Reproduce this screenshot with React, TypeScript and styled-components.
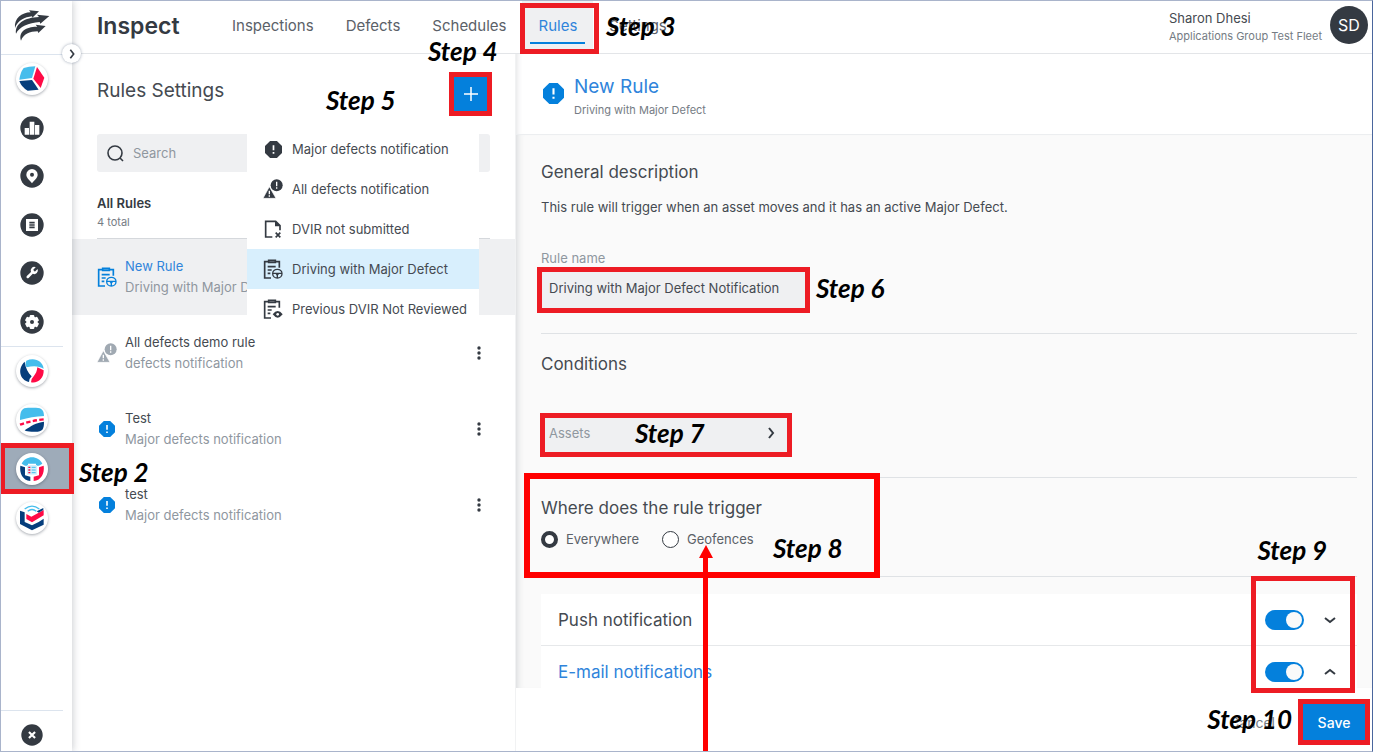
import React from "react";
import styled, { createGlobalStyle, css } from "styled-components";

const color = {
  text: "#454a51",
  dark: "#343a42",
  muted: "#8f979f",
  blue: "#0480dc",
  link: "#2f84db",
  fill: "#eff0f2",
  line: "#dfe2e5",
  red: "#ed1c24",
  navy: "#063e7c",
  sky: "#45bdec",
  crimson: "#ff0a45",
};

const GlobalStyle = createGlobalStyle`
  * { box-sizing: border-box; }
  body { margin: 0; font-family: Inter, "Liberation Sans", sans-serif; color: ${color.text}; background: #fff; }
  button, input { font: inherit; color: inherit; }
  button { border: 0; padding: 0; background: none; cursor: pointer; }
  h1, h2, h3, p, ul { margin: 0; padding: 0; font-weight: 400; }
  ul { list-style: none; }
  svg { display: block; flex: none; }
`;

/* ---------- shell ---------- */

const Page = styled.div`
  position: relative;
  display: flex;
  height: 100vh;
  min-height: 600px;
  overflow: hidden;
  border: 1px solid #a9b4cb;
  border-right-color: #4a669d;
`;

const Sidebar = styled.nav`
  position: relative;
  z-index: 2;
  flex: none;
  width: 71px;
  display: flex;
  flex-direction: column;
  background: #fff;
  box-shadow: 1px 0 7px rgba(50, 60, 75, 0.25);
`;

const SideSection = styled.div<{ $height: number; $top?: number }>`
  display: grid;
  grid-auto-rows: 1fr;
  height: ${(p) => p.$height}px;
  padding-top: ${(p) => p.$top ?? 0}px;
`;

const SideRule = styled.hr`
  width: 62px;
  height: 1px;
  margin: 0;
  border: 0;
  background: #dce4ee;
`;

const SideButton = styled.button<{ $active?: boolean }>`
  display: flex;
  align-items: center;
  justify-content: center;
  padding-right: 10px;
  ${(p) => p.$active && css`background: #9eabb9;`}
`;

const SideSpacer = styled.div`
  flex: 1;
`;

const AppBadge = styled.span`
  display: block;
  border-radius: 50%;
  background: #fff;
  box-shadow: 0 1px 3px rgba(40, 50, 65, 0.4);
`;

const Collapse = styled.button`
  position: absolute;
  z-index: 3;
  right: -9px;
  top: 43px;
  width: 19px;
  height: 19px;
  display: flex;
  align-items: center;
  justify-content: center;
  border-radius: 50%;
  background: #fff;
  box-shadow: 0 0 3px rgba(60, 80, 110, 0.5);
`;

const Main = styled.div`
  flex: 1;
  min-width: 0;
  display: flex;
  flex-direction: column;
`;

const TopBar = styled.header`
  flex: none;
  display: flex;
  height: 53px;
  padding: 0 4px 0 25px;
  border-bottom: 1px solid #e3e5e8;
`;

const Brand = styled.h1`
  width: 119px;
  font-size: 23px;
  line-height: 50px;
  font-weight: 600;
  color: ${color.dark};
`;

const Tab = styled.a<{ $active?: boolean }>`
  position: relative;
  padding: 0 16px;
  font-size: 15px;
  line-height: 49px;
  text-decoration: none;
  color: #5b6168;
  ${(p) =>
    p.$active &&
    css`
      color: ${color.link};
      background: ${color.fill};
      &::after {
        content: "";
        position: absolute;
        left: 8px;
        right: 8px;
        top: 41px;
        height: 2px;
        background: ${color.blue};
      }
    `}
`;

const User = styled.div`
  display: flex;
  gap: 8px;
  margin-left: auto;
  padding-top: 5px;
`;

const UserName = styled.p`
  padding-top: 3px;
  font-size: 13px;
  line-height: 18px;
`;

const UserGroup = styled.p`
  font-size: 11px;
  line-height: 18px;
  color: #757c84;
`;

const Avatar = styled.span`
  width: 38px;
  height: 38px;
  border-radius: 50%;
  background: ${color.dark};
  color: #fff;
  font-size: 16px;
  line-height: 38px;
  text-align: center;
`;

const Columns = styled.div`
  flex: 1;
  min-height: 0;
  display: flex;
`;

/* ---------- rules list ---------- */

const ListPane = styled.section`
  position: relative;
  flex: none;
  width: 443px;
  overflow: hidden;
`;

const ListHead = styled.div`
  display: flex;
  align-items: center;
  justify-content: space-between;
  padding: 20px 26px 20px 25px;
`;

const PaneTitle = styled.h2`
  font-size: 19px;
  line-height: 28px;
  padding-bottom: 6px;
`;

const AddButton = styled.button`
  width: 36px;
  height: 40px;
  display: flex;
  align-items: center;
  justify-content: center;
  background: ${color.blue};
`;

const SearchBox = styled.label`
  display: flex;
  align-items: center;
  gap: 8px;
  height: 38px;
  margin: 0 25px;
  padding: 0 9px;
  border-radius: 3px;
  background: ${color.fill};
`;

const SearchInput = styled.input`
  flex: 1;
  min-width: 0;
  border: 0;
  outline: 0;
  padding: 0;
  background: none;
  font-size: 13px;
  &::placeholder {
    color: ${color.muted};
    opacity: 1;
  }
`;

const ListSummary = styled.div`
  margin: 0 25px;
  padding: 21px 0 7px;
  border-bottom: 1px solid #d5d8dc;
`;

const SummaryTitle = styled.h3`
  font-size: 13px;
  line-height: 20px;
  font-weight: 600;
  color: ${color.dark};
`;

const SummaryCount = styled.p`
  font-size: 11px;
  line-height: 18px;
  color: #757c84;
`;

const RuleRow = styled.li<{ $selected?: boolean }>`
  display: flex;
  align-items: center;
  height: 76px;
  padding: 0 33px 0 25px;
  background: ${(p) => (p.$selected ? color.fill : "transparent")};
`;

const RuleIcon = styled.span`
  display: flex;
  justify-content: center;
  width: 20px;
  margin-right: 8px;
`;

const RuleText = styled.div`
  flex: 1;
`;

const RuleTitle = styled.p<{ $selected?: boolean }>`
  font-size: 13px;
  line-height: 21px;
  color: ${(p) => (p.$selected ? color.link : color.text)};
`;

const RuleKind = styled.p`
  font-size: 13px;
  line-height: 21px;
  color: ${color.muted};
`;

const Menu = styled.ul`
  position: absolute;
  top: 75px;
  left: 175px;
  width: 232px;
  background: #fff;
`;

const MenuItem = styled.li<{ $active?: boolean }>`
  background: ${(p) => (p.$active ? "#d8effd" : "#fff")};
`;

const MenuButton = styled.button`
  display: flex;
  align-items: center;
  width: 100%;
  height: 40px;
  padding-left: 16px;
  gap: 9px;
  font-size: 13px;
  white-space: nowrap;
`;

const MenuIcon = styled.span`
  width: 20px;
  display: flex;
  justify-content: center;
`;

/* ---------- rule editor ---------- */

const Editor = styled.section`
  flex: 1;
  min-width: 0;
  display: flex;
  flex-direction: column;
  border-left: 1px solid #f1f2f3;
`;

const EditorHead = styled.div`
  flex: none;
  display: flex;
  gap: 10px;
  height: 81px;
  padding: 20px 27px 0;
  border-bottom: 1px solid #eceef0;
  box-shadow: inset 6px 0 6px -6px rgba(50, 60, 75, 0.2);
`;

const HeadIcon = styled.span`
  padding-top: 9px;
`;

const EditorTitle = styled.h2`
  font-size: 19px;
  line-height: 25px;
  color: ${color.link};
`;

const EditorKind = styled.p`
  font-size: 11px;
  line-height: 22px;
  color: #757c84;
`;

const EditorBody = styled.div`
  flex: 1;
  min-height: 0;
  overflow: auto;
  scrollbar-width: none;
  padding: 0 15px 0 25px;
  background: #fafafa;
  box-shadow: inset 7px 0 7px -6px rgba(50, 60, 75, 0.2);
`;

const Block = styled.section<{ $height: number }>`
  min-height: ${(p) => p.$height}px;
  border-bottom: 1px solid ${color.line};
`;

const BlockTitle = styled.h3<{ $top: number }>`
  padding-top: ${(p) => p.$top}px;
  font-size: 17px;
  line-height: 24px;
`;

const Description = styled.p`
  padding: 12px 0 30px;
  font-size: 13px;
  line-height: 22px;
`;

const FieldLabel = styled.label`
  display: block;
  font-size: 13px;
  line-height: 20px;
  color: ${color.muted};
`;

const TextField = styled.input`
  display: block;
  width: 265px;
  height: 40px;
  padding: 0 8px;
  border: 0;
  outline: 0;
  background: ${color.fill};
  font-size: 13px;
`;

const AssetsButton = styled.button`
  display: flex;
  align-items: center;
  justify-content: space-between;
  width: 246px;
  height: 40px;
  margin-top: 37px;
  padding: 0 10px 0 8px;
  background: ${color.fill};
  color: ${color.muted};
  font-size: 13px;
`;

const RadioGroup = styled.div`
  display: flex;
  gap: 23px;
  padding-top: 9px;
`;

const RadioLabel = styled.label`
  display: flex;
  align-items: center;
  gap: 8px;
  font-size: 13px;
  line-height: 20px;
  color: #5b6168;
`;

const Radio = styled.input`
  appearance: none;
  width: 17px;
  height: 17px;
  margin: 0;
  border: 1px solid ${color.dark};
  border-radius: 50%;
  background: #fff;
  &:checked {
    border-width: 4px;
  }
`;

const Cards = styled.div`
  margin-top: 17px;
`;

const Card = styled.div`
  display: flex;
  align-items: center;
  height: 52px;
  padding: 0 21px 0 17px;
  background: #fff;
  border-bottom: 1px solid #e6e8ea;
`;

const CardTitle = styled.h3<{ $open?: boolean }>`
  flex: 1;
  font-size: 17px;
  line-height: 24px;
  color: ${(p) => (p.$open ? color.link : color.text)};
`;

const Switch = styled.input`
  appearance: none;
  position: relative;
  width: 39px;
  height: 20px;
  margin: 0 20px 0 0;
  border-radius: 10px;
  background: ${color.blue};
  &::after {
    content: "";
    position: absolute;
    top: 2px;
    right: 2px;
    width: 16px;
    height: 16px;
    border-radius: 50%;
    background: #fafafa;
  }
`;

const EditorFoot = styled.footer`
  flex: none;
  display: flex;
  align-items: center;
  justify-content: flex-end;
  gap: 25px;
  height: 63px;
  padding: 6px 4px 0 0;
  background: #fff;
`;

const CancelButton = styled.button`
  font-size: 14px;
  color: #757c84;
`;

const SaveButton = styled.button`
  width: 68px;
  height: 40px;
  background: ${color.blue};
  color: #fff;
  font-size: 14px;
  font-weight: 500;
`;

/* ---------- walkthrough marks laid over the page ---------- */

type Spot = { $x?: number; $right?: number; $y?: number; $bottom?: number };

const spot = css<Spot>`
  position: absolute;
  z-index: 5;
  pointer-events: none;
  ${(p) => (p.$right !== undefined ? `right: ${p.$right}px;` : `left: ${p.$x}px;`)}
  ${(p) => (p.$bottom !== undefined ? `bottom: ${p.$bottom}px;` : `top: ${p.$y}px;`)}
`;

const Outline = styled.div<Spot & { $w: number; $h: number; $bold?: boolean }>`
  ${spot}
  width: ${(p) => p.$w}px;
  height: ${(p) => p.$h}px;
  border: ${(p) => (p.$bold ? "6px solid #ff0000" : `5px solid ${color.red}`)};
`;

const StepLabel = styled.span<Spot>`
  ${spot}
  font-family: Lato, "Liberation Sans", sans-serif;
  font-size: 26px;
  line-height: 30px;
  font-weight: 700;
  font-style: italic;
  color: #000;
  white-space: nowrap;
`;

const Arrow = styled.div`
  position: absolute;
  z-index: 6;
  left: 698px;
  top: 544px;
  bottom: -1px;
  width: 13px;
  display: flex;
  flex-direction: column;
  align-items: center;
  pointer-events: none;
  &::before {
    content: "";
    border: 7px solid transparent;
    border-top: 0;
    border-bottom: 13px solid #ff0000;
  }
  &::after {
    content: "";
    flex: 1;
    width: 5px;
    background: #ff0000;
  }
`;

/* ---------- icons ---------- */

const FleetLogo = () => (
  <svg width="36" height="33" viewBox="43 27 108 99" fill={color.dark} aria-hidden="true">
    <path d="M46 84C43 56 66 37 93 37L88 31L118 34L98 53L97 49C76 51 54 61 46 84Z" />
    <path d="M49 101C45 72 75 52 118 51L112 44L149 48L122 71L120 66C86 69 60 79 49 101Z" />
    <path d="M64 122C55 94 82 79 113 80L108 74L138 78L116 99L114 94C90 94 71 103 64 122Z" />
  </svg>
);

const Dot = ({ children, size = 24 }: { children: React.ReactNode; size?: number }) => (
  <svg width={size} height={size} viewBox="-36 -36 72 72" aria-hidden="true">
    <circle r="35" fill={color.dark} />
    {children}
  </svg>
);

const ChartIcon = () => (
  <Dot>
    <path d="M-22 0h13v20h-13zM-7 -19h14v39h-14zM9 -9h13v29h-13z" fill="#fff" />
  </Dot>
);
const PinIcon = () => (
  <Dot>
    <path d="M0 22C-6 13-17 6-17-4A17 17 0 0 1 17-4C17 6 6 13 0 22Z" fill="#fff" />
    <circle cy="-4" r="6" fill={color.dark} />
  </Dot>
);
const SheetIcon = () => (
  <Dot>
    <rect x="-18" y="-18" width="36" height="36" fill="#fff" />
    <path d="M-8-7H8M-8 0H8M-8 7H8" stroke={color.dark} strokeWidth="5" />
  </Dot>
);
const WrenchIcon = () => (
  <Dot>
    <path
      transform="translate(-22 -22) scale(1.8)"
      fill="#fff"
      d="M14.7 6.3a1 1 0 0 0 0 1.4l1.6 1.6a1 1 0 0 0 1.4 0l3.77-3.77a6 6 0 0 1-7.94 7.94l-6.91 6.91a2.12 2.12 0 0 1-3-3l6.91-6.91a6 6 0 0 1 7.94-7.94l-3.76 3.76z"
    />
  </Dot>
);
const GearIcon = () => (
  <Dot>
    <circle r="17" fill="#fff" />
    {[0, 60, 120].map((a) => (
      <rect key={a} x="-7" y="-21" width="14" height="42" rx="3" fill="#fff" transform={`rotate(${a})`} />
    ))}
    <circle r="6" fill={color.dark} />
  </Dot>
);
const CloseIcon = () => (
  <Dot size={22}>
    <path d="M-10-10L10 10M10-10L-10 10" stroke="#fff" strokeWidth="7" />
  </Dot>
);

const Badge = ({ children }: { children: React.ReactNode }) => (
  <AppBadge>
    <svg width="32" height="32" viewBox="-48 -48 96 96" aria-hidden="true">
      {children}
    </svg>
  </AppBadge>
);

const CubeApp = () => (
  <Badge>
    <path d="M-25-33Q-10-38 10-38L0-3L-38 2Q-36-18-25-33Z" fill={color.sky} />
    <path d="M15-36L37-4L26 27L4-1Z" fill={color.crimson} />
    <path d="M-38 6L0 3L20 32L-13 35Q-32 24-38 6Z" fill={color.navy} />
  </Badge>
);
const TriangleApp = () => (
  <Badge>
    <path d="M-17-31C8-42 32-30 35-7C22-15 4-17-16-11Q-22-20-17-31Z" fill={color.sky} />
    <path d="M-22-28C-44-8-38 26-9 33Q-8 22-1 16C-12 5-20-10-22-28Z" fill={color.navy} />
    <path d="M16-11L35-2C36 22 18 38-3 34Q-4 24 4 17C12 8 15 0 16-11Z" fill={color.crimson} />
  </Badge>
);
const RoadApp = () => (
  <Badge>
    <path d="M-36 0C-36-28-30-37-12-37H12C30-37 36-28 36-12C10-11-10-7-36 0Z" fill={color.sky} />
    <path d="M-36 14Q-4 2 36-2" stroke={color.crimson} strokeWidth="7" strokeDasharray="13 7" fill="none" />
    <path d="M-22 31C-4 18 12 8 36 5C36 28 32 35 10 35C-8 36-16 35-22 31Z" fill={color.navy} />
  </Badge>
);
const InspectApp = () => (
  <Badge>
    <path d="M-31-16C-20-42 20-42 31-16L21-10H12V-16H-12V-10H-21Z" fill={color.sky} />
    <path d="M-35-10L-21-5V19L-5 23V36C-28 34-38 12-35-10Z" fill={color.navy} />
    <path d="M35-10L21-5V19L5 23V36C28 34 38 12 35-10Z" fill={color.crimson} />
    <path d="M-15-12H15V17H-15Z" fill="#d4effb" />
    <path d="M-11-5H-5M-11 3H-5M-11 11H-5" stroke={color.crimson} strokeWidth="4" />
    <path d="M-1-5H11M-1 3H11M-1 11H11" stroke={color.sky} strokeWidth="3" />
  </Badge>
);
const ShieldApp = () => (
  <Badge>
    <path d="M-22-27Q0-44 22-27M-13-20Q0-31 13-20" stroke={color.sky} strokeWidth="4" fill="none" />
    <path d="M-36-22L-22-17V12L0 22L20 12L35 2V20L0 37L-36 18Z" fill={color.navy} />
    <path d="M-17-12L-2-4L35-24V-8L0 13L-17 3Z" fill={color.crimson} />
    <path d="M14-20L34-30V-24L20-16Z" fill={color.navy} />
  </Badge>
);

const Octagon = ({ size, fill }: { size: number; fill: string }) => (
  <svg width={size} height={size} viewBox="0 0 20 20" aria-hidden="true">
    <path d="M6 0h8l6 6v8l-6 6H6l-6-6V6z" fill={fill} />
    <path d="M9 5h2v6H9zM9 13h2v2H9z" fill="#fff" />
  </svg>
);

const Warnings = ({ fill }: { fill: string }) => (
  <svg width="20" height="20" viewBox="0 0 60 60" aria-hidden="true">
    <circle cx="41" cy="19" r="18" fill={fill} />
    <path d="M39 8h4v14h-4zM39 25h4v4h-4z" fill="#fff" />
    <path d="M19 23L39 58H0Z" fill={fill} stroke="#fff" strokeWidth="2" />
    <path d="M17 35h4v11h-4zM17 49h4v4h-4z" fill="#fff" />
  </svg>
);

const FileX = () => (
  <svg width="20" height="20" viewBox="0 0 60 60" fill="none" stroke={color.dark} strokeWidth="5" aria-hidden="true">
    <path d="M28 54H8V7H38L51 20V34" />
    <path d="M36 7H38L51 20V22H36Z" fill={color.dark} stroke="none" />
    <path d="M38 41L52 55M52 41L38 55" />
  </svg>
);

const Clipboard = ({ stroke, children }: { stroke: string; children: React.ReactNode }) => (
  <svg width="20" height="20" viewBox="0 0 60 60" fill="none" stroke={stroke} strokeWidth="5" aria-hidden="true">
    <path d="M24 57H5V8H16M37 8H49V26" />
    <path d="M17 4H37V10H17Z" />
    <path d="M14 23H38M14 33H26M14 43H22" />
    {children}
  </svg>
);
const ClipboardWheel = ({ stroke }: { stroke: string }) => (
  <Clipboard stroke={stroke}>
    <ellipse cx="43" cy="44" rx="14" ry="13" strokeWidth="4" />
    <path d="M29 43H57M43 44V57" strokeWidth="4" />
    <path d="M36 43H50L43 51Z" fill={stroke} stroke="none" />
  </Clipboard>
);
const ClipboardEye = () => (
  <Clipboard stroke={color.dark}>
    <path d="M29 46Q44 26 59 46Q44 66 29 46Z" fill={color.dark} stroke="none" />
    <circle cx="44" cy="46" r="4" fill="#fff" stroke="none" />
  </Clipboard>
);

const turns = { right: -90, down: 0, up: 180 };
const Chevron = ({ to, size = 12 }: { to: keyof typeof turns; size?: number }) => (
  <svg width={size} height={size} viewBox="0 0 12 12" fill="none" stroke={color.dark} strokeWidth="2" aria-hidden="true">
    <path d="M1 4L6 8L11 4" transform={`rotate(${turns[to]} 6 6)`} />
  </svg>
);

const Kebab = () => (
  <svg width="6" height="16" viewBox="0 0 6 16" fill={color.dark} aria-hidden="true">
    <circle cx="3" cy="3" r="1.7" />
    <circle cx="3" cy="8" r="1.7" />
    <circle cx="3" cy="13" r="1.7" />
  </svg>
);

const Magnifier = () => (
  <svg width="19" height="19" viewBox="0 0 19 19" fill="none" stroke={color.dark} strokeWidth="1.6" aria-hidden="true">
    <circle cx="9" cy="9" r="7" />
    <path d="M14 14L17 17" />
  </svg>
);

const Plus = () => (
  <svg width="14" height="14" viewBox="0 0 14 14" stroke="#fff" strokeWidth="1.5" aria-hidden="true">
    <path d="M7 0V14M0 7H14" />
  </svg>
);

/* ---------- data ---------- */

const tools = [
  { name: "Fleet", icon: <CubeApp /> },
  { name: "Reports", icon: <ChartIcon /> },
  { name: "Places", icon: <PinIcon /> },
  { name: "Logs", icon: <SheetIcon /> },
  { name: "Maintenance", icon: <WrenchIcon /> },
  { name: "Configuration", icon: <GearIcon /> },
];

const apps = [
  { name: "Driver", icon: <TriangleApp /> },
  { name: "Road", icon: <RoadApp /> },
  { name: "Inspect", icon: <InspectApp />, active: true },
  { name: "Compliance", icon: <ShieldApp /> },
];

const rules = [
  { title: "New Rule", kind: "Driving with Major Defect", icon: <ClipboardWheel stroke={color.blue} />, selected: true },
  { title: "All defects demo rule", kind: "defects notification", icon: <Warnings fill="#a0a9b2" /> },
  { title: "Test", kind: "Major defects notification", icon: <Octagon size={16} fill={color.blue} /> },
  { title: "test", kind: "Major defects notification", icon: <Octagon size={16} fill={color.blue} /> },
];

const kinds = [
  { name: "Major defects notification", icon: <Octagon size={17} fill={color.dark} /> },
  { name: "All defects notification", icon: <Warnings fill={color.dark} /> },
  { name: "DVIR not submitted", icon: <FileX /> },
  { name: "Driving with Major Defect", icon: <ClipboardWheel stroke={color.dark} />, active: true },
  { name: "Previous DVIR Not Reviewed", icon: <ClipboardEye /> },
];

const LogoLink = styled.a`
  display: flex;
  height: 53px;
  padding: 8px 0 0 13px;
`;

export default function App() {
  return (
    <>
      <GlobalStyle />
      <Page>
        <Sidebar>
          <LogoLink href="#" aria-label="Home">
            <FleetLogo />
          </LogoLink>
          <SideRule />
          <SideSection $height={291}>
            {tools.map((t) => (
              <SideButton key={t.name} aria-label={t.name}>
                {t.icon}
              </SideButton>
            ))}
          </SideSection>
          <SideRule />
          <SideSection $height={195}>
            {apps.map((a) => (
              <SideButton key={a.name} aria-label={a.name} $active={a.active}>
                {a.icon}
              </SideButton>
            ))}
          </SideSection>
          <SideSpacer />
          <SideRule />
          <SideSection $height={40} $top={8}>
            <SideButton aria-label="Close">
              <CloseIcon />
            </SideButton>
          </SideSection>
          <Collapse aria-label="Expand menu">
            <Chevron to="right" size={10} />
          </Collapse>
        </Sidebar>

        <Main>
          <TopBar>
            <Brand>Inspect</Brand>
            <Tab href="#">Inspections</Tab>
            <Tab href="#">Defects</Tab>
            <Tab href="#">Schedules</Tab>
            <Tab href="#" $active>
              Rules
            </Tab>
            <Tab href="#">Settings</Tab>
            <User>
              <div>
                <UserName>Sharon Dhesi</UserName>
                <UserGroup>Applications Group Test Fleet</UserGroup>
              </div>
              <Avatar>SD</Avatar>
            </User>
          </TopBar>

          <Columns>
            <ListPane>
              <ListHead>
                <PaneTitle>Rules Settings</PaneTitle>
                <AddButton aria-label="Add rule">
                  <Plus />
                </AddButton>
              </ListHead>
              <SearchBox>
                <Magnifier />
                <SearchInput placeholder="Search" aria-label="Search" />
              </SearchBox>
              <ListSummary>
                <SummaryTitle>All Rules</SummaryTitle>
                <SummaryCount>4 total</SummaryCount>
              </ListSummary>
              <ul>
                {rules.map((r, i) => (
                  <RuleRow key={i} $selected={r.selected}>
                    <RuleIcon>{r.icon}</RuleIcon>
                    <RuleText>
                      <RuleTitle $selected={r.selected}>{r.title}</RuleTitle>
                      <RuleKind>{r.kind}</RuleKind>
                    </RuleText>
                    {!r.selected && (
                      <button aria-label="Rule options">
                        <Kebab />
                      </button>
                    )}
                  </RuleRow>
                ))}
              </ul>
              <Menu>
                {kinds.map((k) => (
                  <MenuItem key={k.name} $active={k.active}>
                    <MenuButton>
                      <MenuIcon>{k.icon}</MenuIcon>
                      {k.name}
                    </MenuButton>
                  </MenuItem>
                ))}
              </Menu>
            </ListPane>

            <Editor>
              <EditorHead>
                <HeadIcon>
                  <Octagon size={21} fill={color.blue} />
                </HeadIcon>
                <div>
                  <EditorTitle>New Rule</EditorTitle>
                  <EditorKind>Driving with Major Defect</EditorKind>
                </div>
              </EditorHead>
              <EditorBody>
                <Block $height={199}>
                  <BlockTitle $top={25}>General description</BlockTitle>
                  <Description>
                    This rule will trigger when an asset moves and it has an active Major Defect.
                  </Description>
                  <FieldLabel htmlFor="rule-name">Rule name</FieldLabel>
                  <TextField id="rule-name" defaultValue="Driving with Major Defect Notification" />
                </Block>
                <Block $height={144}>
                  <BlockTitle $top={18}>Conditions</BlockTitle>
                  <AssetsButton>
                    Assets
                    <Chevron to="right" />
                  </AssetsButton>
                </Block>
                <Block $height={99}>
                  <BlockTitle $top={18}>Where does the rule trigger</BlockTitle>
                  <RadioGroup>
                    <RadioLabel>
                      <Radio type="radio" name="where" defaultChecked />
                      Everywhere
                    </RadioLabel>
                    <RadioLabel>
                      <Radio type="radio" name="where" />
                      Geofences
                    </RadioLabel>
                  </RadioGroup>
                </Block>
                <Cards>
                  <Card>
                    <CardTitle>Push notification</CardTitle>
                    <Switch type="checkbox" role="switch" aria-label="Push notification" defaultChecked />
                    <button aria-label="Expand">
                      <Chevron to="down" />
                    </button>
                  </Card>
                  <Card>
                    <CardTitle $open>E-mail notifications</CardTitle>
                    <Switch type="checkbox" role="switch" aria-label="E-mail notifications" defaultChecked />
                    <button aria-label="Collapse">
                      <Chevron to="up" />
                    </button>
                  </Card>
                </Cards>
              </EditorBody>
              <EditorFoot>
                <CancelButton>Cancel</CancelButton>
                <SaveButton>Save</SaveButton>
              </EditorFoot>
            </Editor>
          </Columns>
        </Main>

        <Outline $x={-1} $y={442} $w={74} $h={51} />
        <StepLabel $x={78} $y={456}>Step 2</StepLabel>
        <Outline $x={519} $y={2} $w={79} $h={51} />
        <StepLabel $x={605} $y={10}>Step 3</StepLabel>
        <Outline $x={448} $y={71} $w={43} $h={44} />
        <StepLabel $x={427} $y={35}>Step 4</StepLabel>
        <StepLabel $x={325} $y={84}>Step 5</StepLabel>
        <Outline $x={536} $y={266} $w={273} $h={46} />
        <StepLabel $x={815} $y={272}>Step 6</StepLabel>
        <Outline $x={539} $y={412} $w={252} $h={44} />
        <StepLabel $x={634} $y={417}>Step 7</StepLabel>
        <Outline $x={523} $y={472} $w={356} $h={105} $bold />
        <StepLabel $x={772} $y={532}>Step 8</StepLabel>
        <Outline $right={17} $y={575} $w={104} $h={117} />
        <StepLabel $right={45} $y={534}>Step 9</StepLabel>
        <Outline $right={2} $bottom={6} $w={72} $h={46} />
        <StepLabel $right={80} $bottom={17}>Step 10</StepLabel>
        <Arrow />
      </Page>
    </>
  );
}
